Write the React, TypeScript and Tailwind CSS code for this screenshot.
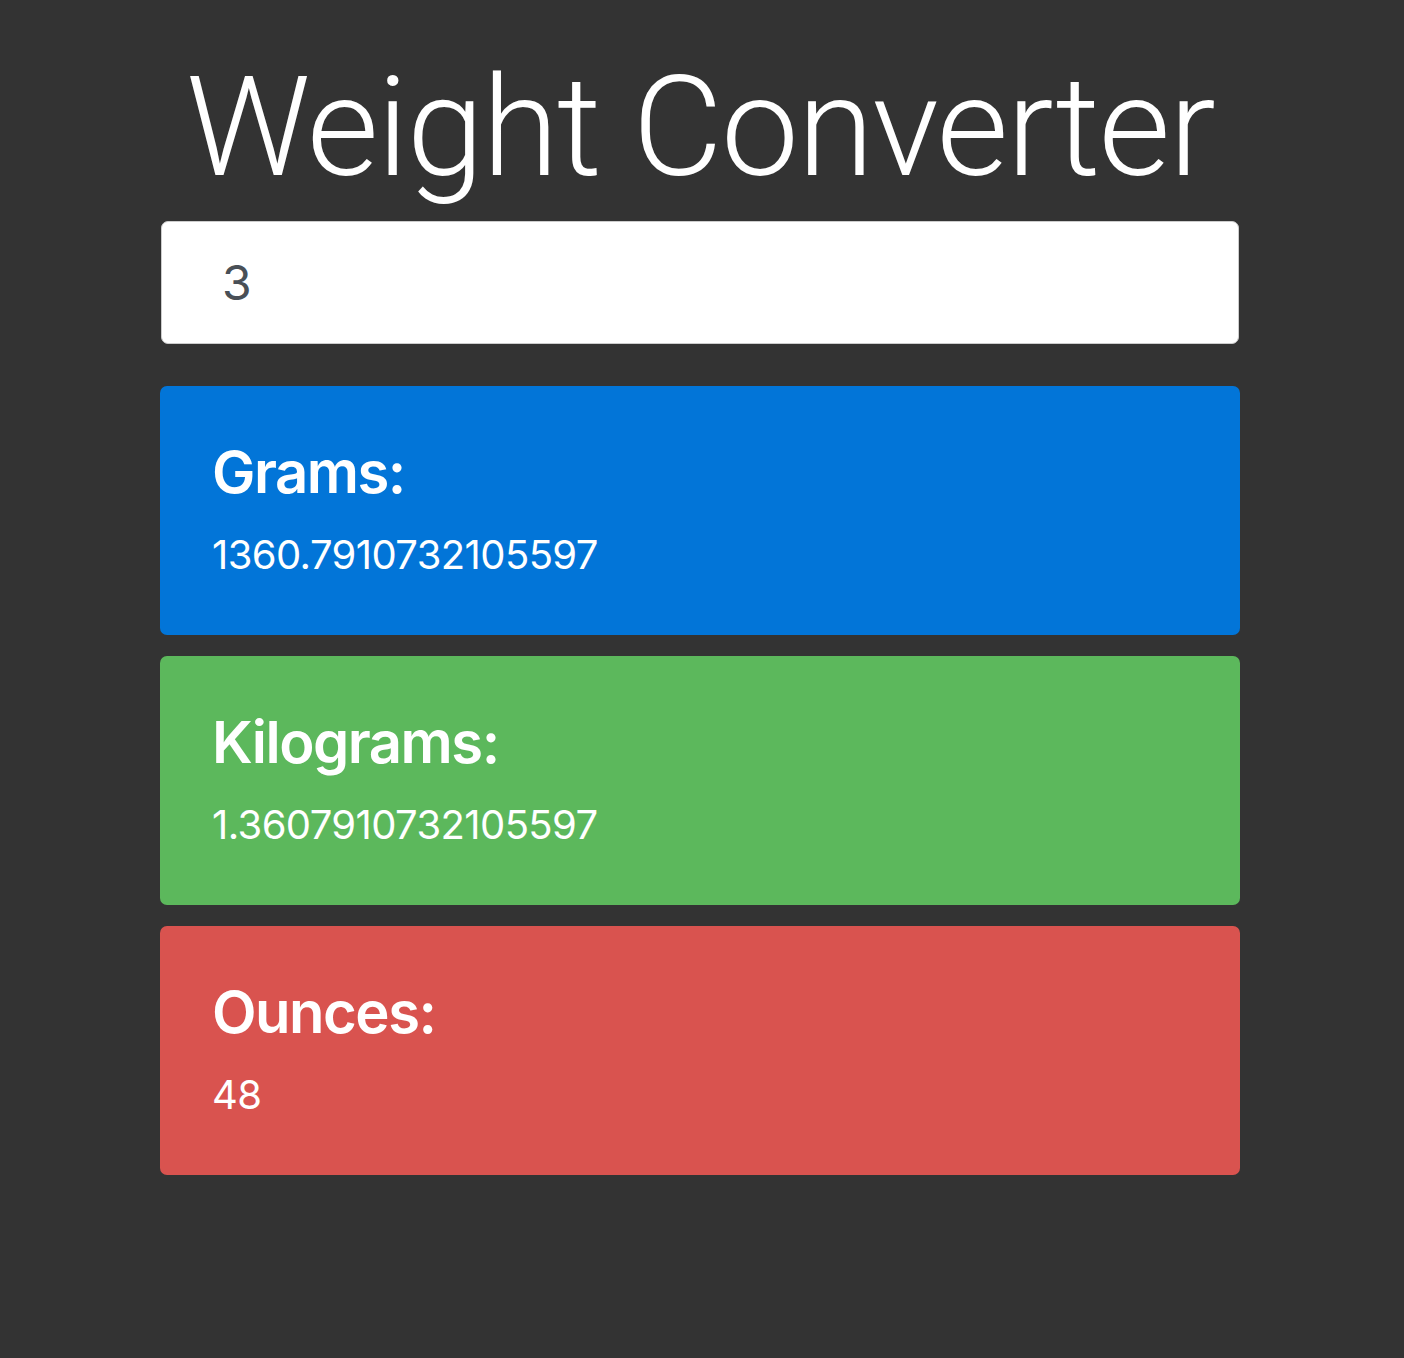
import React from "react";

const cards = [
  { label: "Grams:", value: "1360.7910732105597", bg: "bg-[#0275d8]" },
  { label: "Kilograms:", value: "1.3607910732105597", bg: "bg-[#5cb85c]" },
  { label: "Ounces:", value: "48", bg: "bg-[#d9534f]" },
];

export default function App() {
  return (
    <div className="min-h-[1358px] w-full bg-[#333333] font-['Inter',sans-serif] text-white">
      <div className="ml-[160px] w-[1080px] pt-[44px]">
        <h1 className="whitespace-nowrap text-center font-['Roboto',sans-serif] text-[139px] font-light leading-[167px] tracking-[-1.6px]">
          Weight Converter
        </h1>
        <div className="mt-[10px] mx-[1px] flex h-[123px] items-center rounded-[7px] border border-[#ccc] bg-white px-[60px]">
          <span className="text-[48px] text-[#495057]">3</span>
        </div>
        <div className="mt-[42px] flex flex-col gap-[21px]">
          {cards.map((c) => (
            <div
              key={c.label}
              className={`${c.bg} h-[249px] rounded-[7px] px-[52px] pt-[52px]`}
            >
              <div className="text-[58px] font-semibold leading-[1.2] tracking-[-1.5px]">
                {c.label}
              </div>
              <div className="mt-[23px] text-[40px] leading-[1.2] tracking-[-0.6px]">
                {c.value}
              </div>
            </div>
          ))}
        </div>
      </div>
    </div>
  );
}
